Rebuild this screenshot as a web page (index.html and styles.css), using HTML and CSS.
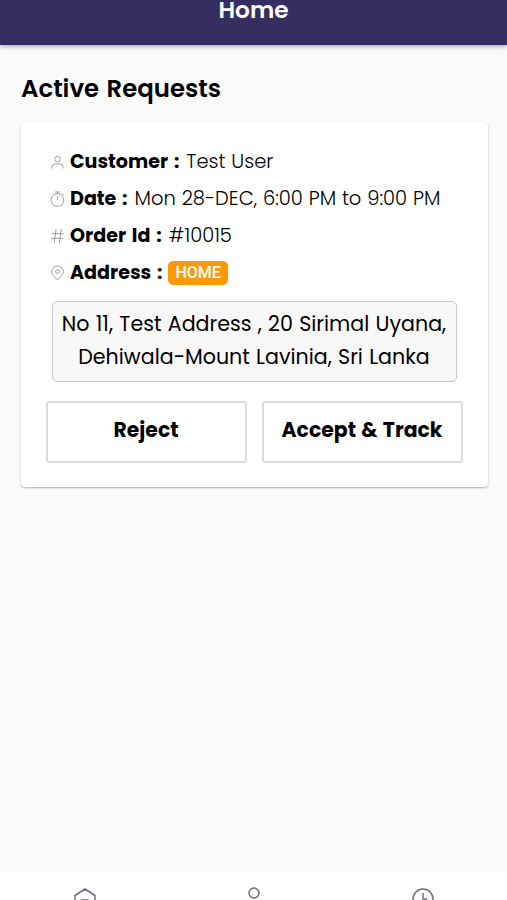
FILE: index.html
```html
<!DOCTYPE html>
<html lang="en">
<head>
  <meta charset="UTF-8" />
  <meta name="viewport" content="width=device-width, initial-scale=1.0"/>
  <title>Home</title>
  <link rel="stylesheet" href="styles.css">
</head>
<body>

  <header class="header">
    <h1 class="header-title">Home</h1>
  </header>

  <main class="content">
    <h2 class="section-title">Active Requests</h2>

    <div class="card">
      <div class="details">
        <div class="row">
          <svg class="icon" viewBox="0 0 16 16"><circle cx="8" cy="5" r="3"/><path d="M2 15v-1.500a3.500 3.500 0 0 1 3.500-3.500h5a3.500 3.500 0 0 1 3.500 3.500V15"/></svg>
          <span class="label">Customer :</span>
          <span class="value">Test User</span>
        </div>
        <div class="row">
          <svg class="icon" viewBox="0 0 16 16"><circle cx="8" cy="9" r="6.800"/><path d="M5.500.5h5M8 .5v1.700M8 5.500v4M13.500 2.500l1.300 1.300"/></svg>
          <span class="label">Date :</span>
          <span class="value">Mon 28-DEC, 6:00 PM to 9:00 PM</span>
        </div>
        <div class="row">
          <svg class="icon" viewBox="0 0 16 16"><path d="M6.500.5l-2 15M12 .5l-2 15M2 5.500h13M1 10.500h13"/></svg>
          <span class="label">Order Id :</span>
          <span class="value">#10015</span>
        </div>
        <div class="row">
          <svg class="icon" viewBox="0 0 16 16"><path d="M8 15.500C5 12 1.700 9.500 1.700 6.500a6.300 6 0 0 1 12.600 0C14.300 9.500 11 12 8 15.500z"/><circle cx="8" cy="6.500" r="2"/></svg>
          <span class="label">Address :</span>
          <span class="badge">HOME</span>
        </div>
      </div>

      <div class="address">
        <span>No 11, Test Address , 20 Sirimal Uyana,</span>
        <span>Dehiwala-Mount Lavinia, Sri Lanka</span>
      </div>

      <div class="actions">
        <button>Reject</button>
        <button>Accept &amp; Track</button>
      </div>
    </div>
  </main>

  <nav class="tabs">
    <a class="tab"><svg class="tab-icon" viewBox="0 0 24 24"><path d="M2 8.500L12 2l10 6.500V21H2zM9 21v-8h6v8"/></svg></a>
    <a class="tab"><svg class="tab-icon" viewBox="0 0 24 24"><circle cx="12" cy="6" r="5"/><path d="M2 23v-3a4 4 0 0 1 4-4h12a4 4 0 0 1 4 4v3"/></svg></a>
    <a class="tab"><svg class="tab-icon" viewBox="0 0 24 24"><circle cx="12" cy="12" r="10"/><path d="M12 6v6h4"/></svg></a>
  </nav>

</body>
</html>
```
FILE: styles.css
```css
* {
  box-sizing: border-box;
}

body {
  display: flex;
  flex-direction: column;
  height: 100vh;
  margin: 0;
  overflow: hidden;
  background-color: #fafafa;
  color: #000;
  font-family: Poppins, Inter, sans-serif;
  font-size: 19.1px;
  word-spacing: 1.7px;
}

.header {
  height: 45px;
  flex-shrink: 0;
  background-color: #362e60;
  box-shadow: 0 1px 5px rgba(0, 0, 0, 0.4);
  text-align: center;
}

.header-title {
  margin: -5px 0 0;
  color: #fff;
  font-size: 23.2px;
  font-weight: 600;
  line-height: 31px;
}

.content {
  flex: 1;
  padding: 29px 19.5px 0 21px;
}

.section-title {
  margin: 0 0 18px;
  font-size: 24.4px;
  font-weight: 600;
  line-height: 30px;
}

.card {
  height: 365px;
  padding: 21px 25px 0 24.5px;
  background-color: #fff;
  border-radius: 4px;
  box-shadow: 0 1px 2px rgba(0, 0, 0, 0.3);
}

.details {
  padding-left: 4.5px;
}

.row {
  display: flex;
  align-items: center;
  height: 37px;
  white-space: nowrap;
}

.icon {
  width: 15px;
  height: 16px;
  margin: 1px 5px 0 0;
  fill: none;
  stroke: #999;
}

.label {
  margin-right: 7px;
  font-weight: 700;
}

.value {
  font-size: 19.5px;
  font-weight: 300;
  word-spacing: 0.5px;
}

.badge {
  height: 24px;
  margin-left: -1px;
  padding: 0 7px;
  background-color: #fd9806;
  border-radius: 5px;
  color: #fff;
  font-family: Roboto, sans-serif;
  font-size: 16px;
  font-weight: 500;
  line-height: 24px;
}

.address {
  display: flex;
  flex-direction: column;
  align-items: center;
  height: 81px;
  margin: 10px 6px 0;
  padding-top: 5px;
  background-color: #f8f8f8;
  border: 1px solid #c8c8c8;
  border-radius: 5px;
  font-size: 20.6px;
  line-height: 33px;
  white-space: nowrap;
  word-spacing: 0.8px;
}

.actions {
  display: grid;
  grid-template-columns: 1fr 1fr;
  gap: 15px;
  margin-top: 19px;
}

.actions button {
  height: 62px;
  padding: 0 0 5px;
  background-color: #fff;
  border: 2px solid #dcdcdc;
  border-radius: 3px;
  color: #000;
  font-family: inherit;
  font-size: 20.4px;
  font-weight: 700;
  word-spacing: 1px;
}

.tabs {
  display: flex;
  height: 28px;
  flex-shrink: 0;
  overflow: hidden;
  background-color: #fff;
}

.tab {
  flex: 1;
  padding-top: 15px;
  text-align: center;
}

.tab-icon {
  width: 24px;
  height: 24px;
  fill: none;
  stroke: #716c82;
  stroke-width: 1.5;
}
```
